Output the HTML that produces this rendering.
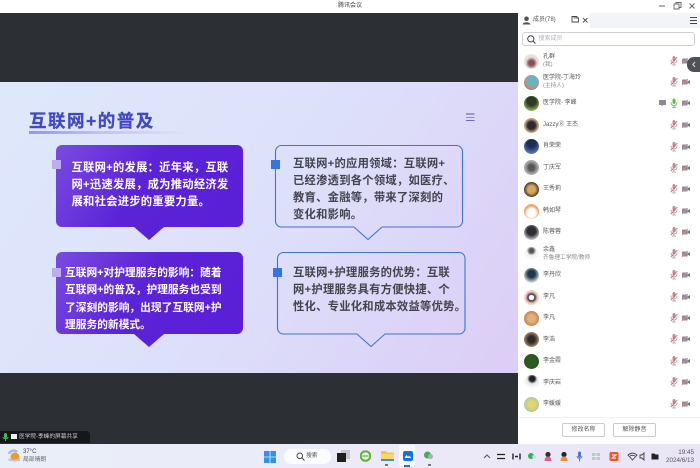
<!DOCTYPE html>
<html lang="zh"><head><meta charset="utf-8"><title>腾讯会议</title>
<style>
*{margin:0;padding:0;box-sizing:border-box}
html,body{width:700px;height:468px;overflow:hidden;background:#2c2f33;font-family:"Liberation Sans","Noto Sans CJK SC",sans-serif}
.a{position:absolute}
.t{position:absolute;white-space:nowrap}
#top{left:0;top:0;width:700px;height:13px;background:#fff}
#slide{left:0;top:82px;width:518px;height:291px;background:linear-gradient(125deg,#dfe8fb 0%,#dde0fa 50%,#dccdf6 100%)}
.card{position:absolute;width:187px;height:82px;border-radius:6px}
.p{background:linear-gradient(120deg,#7a4be0 0%,#5a24d6 45%,#5a1fd8 100%)}
.ln{font-size:11.3px;font-weight:bold;line-height:17px;letter-spacing:.25px}
.w{color:#fff}.d{color:#44444c}
.sq{position:absolute;width:9px;height:9px}
#panel{left:518px;top:13px;width:182px;height:431px;background:#fff}
.n{position:absolute;left:543px;font-size:6px;color:#555;white-space:nowrap;line-height:8px}
.s{position:absolute;left:543px;font-size:5.700px;color:#888;white-space:nowrap;line-height:8px}
.av{position:absolute;left:524px;width:15px;height:15px;border-radius:50%;overflow:hidden}
.btn{position:absolute;top:423px;width:43px;height:14px;border:1px solid #c9c9cf;border-radius:2px;background:#fff;font-size:6px;color:#555;text-align:center;line-height:12px}
#bar{left:0;top:444px;width:700px;height:24px;background:linear-gradient(90deg,#e9eff9 0%,#eceaf9 50%,#e9e5f7 100%)}
</style></head><body>
<svg width="0" height="0" style="position:absolute"><defs>
<g id="mic"><rect x="2.500" y="0" width="3" height="5.500" rx="1.500" fill="#b58f98"/><path d="M1 3.500c0 2.600 1.400 3.500 3 3.500s3-.9 3-3.500M4 7v1.600M2 9h4" fill="none" stroke="#a99aa2" stroke-width=".8"/><path d="M7.400 1 .8 8.200" stroke="#d9666e" stroke-width=".9"/></g>
<g id="cam"><rect x="0" y="1.500" width="5.600" height="5" rx=".8" fill="#8d8d98"/><path d="M5.600 3.500 8 2v4L5.600 4.700z" fill="#777"/><path d="M.2 7 5.800 1" stroke="#e2848a" stroke-width="1"/></g>
</defs></svg>

<div class="a" id="top"></div>
<div class="t" style="left:338px;top:2px;font-size:6px;color:#444;line-height:9px">腾讯会议</div>
<svg class="a" style="left:655px;top:0" width="45" height="12"><path d="M4 6h6" stroke="#666"/><path d="M19 4h5v5h-5zM21 4V2.500h5v5h-2" fill="none" stroke="#666" stroke-width=".9"/><path d="M34.500 3.500l5 5m0-5l-5 5" stroke="#666"/></svg>

<div class="a" id="slide"></div>
<div class="t" style="left:29px;top:111px;font-size:17.500px;line-height:21px;font-weight:bold;color:#4249c6;letter-spacing:1.500px;-webkit-text-stroke:.3px #4249c6">互联网+的普及</div>
<div class="a" style="left:29px;top:131px;width:160px;height:3px;background:linear-gradient(90deg,#9b93e8,#c5c2f0 45%,rgba(220,222,250,0))"></div>
<svg class="a" style="left:466px;top:113px" width="9" height="9"><path d="M0 1h8.500" stroke="#5a52c8"/><path d="M0 4.500h8.500" stroke="#8f88dc"/><path d="M0 7.500h8.500" stroke="#7068d0"/></svg>

<!-- card 1 -->
<div class="card p" style="left:56px;top:145px"></div>
<svg class="a" style="left:134px;top:226px" width="30" height="15"><path d="M0 1H30L15 14z" fill="#5a22d6"/></svg>
<div class="sq" style="left:52px;top:160px;background:#c0aaf0"></div>
<div class="t ln w" style="left:71.500px;top:159.500px">互联网+的发展：近年来，互联<br>网+迅速发展，成为推动经济发<br>展和社会进步的重要力量。</div>

<!-- card 3 -->
<div class="card p" style="left:56px;top:252px"></div>
<svg class="a" style="left:134px;top:333px" width="30" height="15"><path d="M0 1H30L15 14z" fill="#5a22d6"/></svg>
<div class="sq" style="left:52px;top:268px;background:#c0aaf0"></div>
<div class="t ln w" style="left:65px;top:265px;font-size:10.700px;letter-spacing:.05px;line-height:17.300px">互联网+对护理服务的影响：随着<br>互联网+的普及，护理服务也受到<br>了深刻的影响，出现了互联网+护<br>理服务的新模式。</div>

<!-- card 2 -->
<svg class="a" style="left:270px;top:140px" width="200" height="105"><path d="M11.500 5.500H186.500a6 6 0 0 1 6 6V81a6 6 0 0 1-6 6H112L98 99.500 84 87H11.500a6 6 0 0 1-6-6V11.500a6 6 0 0 1 6-6z" fill="none" stroke="#3f74d2" stroke-width="1.100"/></svg>
<div class="sq" style="left:271px;top:160px;background:#3573e8"></div>
<div class="t ln d" style="left:293px;top:156px">互联网+的应用领域：互联网+<br>已经渗透到各个领域，如医疗、<br>教育、金融等，带来了深刻的<br>变化和影响。</div>

<!-- card 4 -->
<svg class="a" style="left:272px;top:247px" width="200" height="105"><path d="M11.500 5.500H187a6 6 0 0 1 6 6V81a6 6 0 0 1-6 6H113L99 99.500 85 87H11.500a6 6 0 0 1-6-6V11.500a6 6 0 0 1 6-6z" fill="none" stroke="#3f74d2" stroke-width="1.100"/></svg>
<div class="sq" style="left:273px;top:268px;background:#3573e8"></div>
<div class="t ln d" style="left:293px;top:265px">互联网+护理服务的优势：互联<br>网+护理服务具有方便快捷、个<br>性化、专业化和成本效益等优势。</div>

<div class="a" style="left:519px;top:223px;width:2px;height:13px;background:#d8d8de"></div>

<!-- bottom-left banner -->
<div class="a" style="left:0;top:431px;width:90px;height:12px;background:#15171a;border-radius:0 4px 0 0"></div>
<svg class="a" style="left:2px;top:433px" width="16" height="9"><rect x="2" y="0" width="3" height="5" rx="1.500" fill="#3fc24a"/><path d="M1 4c0 2 5 2 5 0M3.500 6v2" stroke="#3fc24a" fill="none"/><rect x="9" y="1" width="6" height="5" fill="#eee"/></svg>
<div class="t" style="left:19px;top:433px;font-size:5.700px;line-height:9px;color:#c9c9c9">医学院-季峰的屏幕共享</div>

<!-- panel -->
<div class="a" id="panel"></div>
<div class="a" style="left:590px;top:13px;width:110px;height:15px;background:#f2f4f9"></div>
<svg class="a" style="left:522px;top:16px" width="10" height="9"><circle cx="4.500" cy="2.800" r="2.300" fill="#555"/><path d="M.5 8.500c.4-3 7.600-3 8 0z" fill="#555"/></svg>
<div class="t" style="left:533px;top:16px;font-size:6px;line-height:9px;color:#555">成员(78)</div>
<svg class="a" style="left:571px;top:15px" width="20" height="10"><path d="M1 1.500h5v1.500h1.500v4H1z" fill="none" stroke="#444" stroke-width=".9"/><path d="M3 1v2h4" stroke="#444" stroke-width=".7" fill="none"/><path d="M12 3l4.500 4.500m0-4.500L12 7.500" stroke="#555"/></svg>
<svg class="a" style="left:689px;top:16px" width="9" height="9"><path d="M1 1.500h7M1 4.500h7M1 7.500h7" stroke="#444"/></svg>
<div class="a" style="left:522px;top:32px;width:173px;height:14px;border:1px solid #ccd0d6;border-radius:3px;background:#fff"></div>
<svg class="a" style="left:526px;top:34px" width="11" height="11"><circle cx="4.800" cy="4.800" r="3.100" fill="none" stroke="#444" stroke-width="1"/><path d="M7 7l2.500 2.500" stroke="#444"/></svg>
<div class="t" style="left:538.500px;top:35px;font-size:6px;line-height:8px;color:#b5b5bb">搜索成员</div>

<!-- rows -->
<div class="av" style="top:54px;background:radial-gradient(circle at 50% 60%,#8a4c58 0 22%,#e6ded8 50%,#efeae6)"></div>
<div class="n" style="top:53px">孔群</div><div class="s" style="top:61px">(我)</div>
<div class="av" style="top:75px;background:radial-gradient(circle at 55% 40%,#63b7c0 0 35%,#c98a7c 60%,#6a4a50)"></div>
<div class="n" style="top:74px">医学院-丁海玲</div><div class="s" style="top:82px">(主持人)</div>
<div class="av" style="top:96px;background:radial-gradient(circle at 50% 35%,#2e3a24 0 35%,#8fb04a 75%)"></div>
<div class="n" style="top:99px">医学院- 李峰</div>
<div class="av" style="top:118px;background:radial-gradient(circle at 50% 50%,#2a2a30 0 35%,#cfa878 65%,#8a6a50)"></div>
<div class="n" style="top:121px">Jazzy⑧ 王杰</div>
<div class="av" style="top:139px;background:radial-gradient(circle at 50% 30%,#1f2c50 0 30%,#4a6fb8 70%)"></div>
<div class="n" style="top:142px">肖荣荣</div>
<div class="av" style="top:160px;background:radial-gradient(circle,#555 0 25%,#a8a8a8 60%)"></div>
<div class="n" style="top:164px">丁庆军</div>
<div class="av" style="top:182px;background:radial-gradient(circle,#d9a860 0 35%,#332a24 75%)"></div>
<div class="n" style="top:185px">王秀莉</div>
<div class="av" style="top:204px;background:radial-gradient(circle at 50% 60%,#fff 0 38%,#ee9e62 62%,#fbe2cc)"></div>
<div class="n" style="top:207px">韩如琴</div>
<div class="av" style="top:225px;background:radial-gradient(circle at 50% 40%,#2e2c34 0 35%,#c8c6cc 75%)"></div>
<div class="n" style="top:228px">陈蓉蓉</div>
<div class="av" style="top:247px;background:radial-gradient(circle at 50% 25%,#555 0 15%,#f0f0ec 35%,#fff 70%)"></div>
<div class="n" style="top:246px">余鑫</div><div class="s" style="top:254px">齐鲁理工学院/教师</div>
<div class="av" style="top:268px;background:radial-gradient(circle at 50% 40%,#1e3a48 0 30%,#cfd8d0 70%)"></div>
<div class="n" style="top:271px">李丹欣</div>
<div class="av" style="top:290px;background:radial-gradient(circle,#fff 0 22%,#333 30%,#f5c8c0 55%,#fbe4e0)"></div>
<div class="n" style="top:293px">李凡</div>
<div class="av" style="top:311px;background:radial-gradient(circle at 50% 50%,#e0b080 0 35%,#c67a36 75%)"></div>
<div class="n" style="top:314px">李凡</div>
<div class="av" style="top:332px;background:radial-gradient(circle at 50% 50%,#2e2a28 0 30%,#a89070 75%)"></div>
<div class="n" style="top:336px">李浩</div>
<div class="av" style="top:354px;background:radial-gradient(circle,#2c5a22 0 50%,#1f4a1c)"></div>
<div class="n" style="top:357px">李金霞</div>
<div class="av" style="top:375px;background:radial-gradient(circle at 55% 25%,#222 0 18%,#e6e6e6 36%,#fff 70%)"></div>
<div class="n" style="top:379px">李庆岩</div>
<div class="av" style="top:397px;background:radial-gradient(circle,#e0d86a 0 30%,#a8c4b0 75%)"></div>
<div class="n" style="top:400px">李媛媛</div>

<!-- row icons -->
<svg class="a" style="left:670px;top:50px" width="22" height="362">
<use href="#mic" x="0" y="6"/><use href="#cam" x="12" y="7"/>
<use href="#mic" x="0" y="27"/><use href="#cam" x="12" y="28"/>
<use href="#cam" x="12" y="49"/>
<g transform="translate(0 48.500)"><rect x="2.500" y="0" width="3" height="5.500" rx="1.500" fill="#55c23e"/><path d="M1 3.500c0 2.600 1.400 3.500 3 3.500s3-.9 3-3.500M4 7v1.600M2 9h4" fill="none" stroke="#55c23e" stroke-width=".8"/></g>
<use href="#mic" x="0" y="70"/><use href="#cam" x="12" y="71"/>
<use href="#mic" x="0" y="92"/><use href="#cam" x="12" y="93"/>
<use href="#mic" x="0" y="113"/><use href="#cam" x="12" y="114"/>
<use href="#mic" x="0" y="134"/><use href="#cam" x="12" y="135"/>
<use href="#mic" x="0" y="156"/><use href="#cam" x="12" y="157"/>
<use href="#mic" x="0" y="177"/><use href="#cam" x="12" y="178"/>
<use href="#mic" x="0" y="199"/><use href="#cam" x="12" y="200"/>
<use href="#mic" x="0" y="220"/><use href="#cam" x="12" y="221"/>
<use href="#mic" x="0" y="242"/><use href="#cam" x="12" y="243"/>
<use href="#mic" x="0" y="263"/><use href="#cam" x="12" y="264"/>
<use href="#mic" x="0" y="284"/><use href="#cam" x="12" y="285"/>
<use href="#mic" x="0" y="306"/><use href="#cam" x="12" y="307"/>
<use href="#mic" x="0" y="327"/><use href="#cam" x="12" y="328"/>
<use href="#mic" x="0" y="349"/><use href="#cam" x="12" y="350"/>
</svg>
<svg class="a" style="left:658px;top:99px" width="10" height="9"><path d="M1 1h7v5H5L4 7.500 3.200 6H1z" fill="#8b8b92"/></svg>
<div class="a" style="left:687px;top:57px;width:13px;height:15px;background:#4f5254;border-radius:7px 0 0 7px"></div>
<svg class="a" style="left:691px;top:61px" width="6" height="7"><path d="M4 1 1.800 3.500 4 6" stroke="#ddd" fill="none"/></svg>

<div class="a" style="left:518px;top:417px;width:182px;height:1px;background:#f1f1f3"></div>
<div class="btn" style="left:562px">修改名称</div>
<div class="btn" style="left:613px">解除静音</div>

<!-- taskbar -->
<div class="a" id="bar"></div>
<svg class="a" style="left:7px;top:449px" width="14" height="14"><path d="M2 5C3 1.500 8 .5 10 3" fill="none" stroke="#a9bcd8" stroke-width="2.500"/><circle cx="8" cy="8" r="4.500" fill="#ef9a2e"/><path d="M1 9c3 2 8 2 12 .5V12H2z" fill="#b4c8e4"/></svg>
<div class="t" style="left:23px;top:449px;font-size:6px;line-height:7px;color:#444">37°C</div>
<div class="t" style="left:23px;top:456px;font-size:5.800px;line-height:8px;color:#666">局部晴朗</div>

<svg class="a" style="left:264px;top:451px" width="12" height="12"><path d="M0 0h5.600v5.600H0zM6.400 0H12v5.600H6.400zM0 6.400h5.600V12H0zM6.400 6.400H12V12H6.400z" fill="#2f93e8"/></svg>
<div class="a" style="left:284px;top:449px;width:47px;height:15px;border-radius:8px;background:#fbfcfe"></div>
<svg class="a" style="left:296px;top:452px" width="9" height="9"><circle cx="3.800" cy="3.800" r="2.800" fill="none" stroke="#444"/><path d="M6 6l2.500 2.500" stroke="#444"/></svg>
<div class="t" style="left:306px;top:452px;font-size:5.800px;line-height:8px;color:#555">搜索</div>
<svg class="a" style="left:337px;top:450px" width="13" height="13"><rect x="4" y="0" width="9" height="9" fill="#c8c8cc"/><rect x="0" y="3" width="9" height="9" fill="#1e1e20"/></svg>
<svg class="a" style="left:360px;top:450px" width="11" height="12"><circle cx="5.500" cy="6" r="4.800" fill="none" stroke="#59b52e" stroke-width="2"/><path d="M2.500 6h6" stroke="#7ac73e" stroke-width="1.500"/></svg>
<svg class="a" style="left:381px;top:450px" width="13" height="12"><path d="M0 1h5l1 1.500h7V11H0z" fill="#f2c53f"/><rect x="0" y="4" width="13" height="7" fill="#f8d768"/><rect x="0" y="9" width="13" height="2" fill="#3d90d8"/></svg>
<div class="a" style="left:385px;top:464px;width:3px;height:2px;background:#777"></div>
<div class="a" style="left:399px;top:445px;width:16px;height:21px;background:#f6f8fd;border-radius:2px"></div>
<svg class="a" style="left:403px;top:451px" width="10" height="10"><rect width="10" height="10" rx="2" fill="#1670e8"/><path d="M1.500 7l2-3 1.500 2 1-1.500L8.500 7z" fill="#fff"/></svg>
<div class="a" style="left:404px;top:465px;width:6px;height:2px;background:#1f6fd6"></div>
<svg class="a" style="left:423px;top:450px" width="11" height="11"><circle cx="4.500" cy="5" r="3.500" fill="#41ad55"/><circle cx="7.500" cy="6.500" r="2.500" fill="#9fb8a4"/></svg>
<div class="a" style="left:428px;top:464px;width:3px;height:2px;background:#777"></div>

<svg class="a" style="left:482px;top:450px" width="180" height="13">
<path d="M2 8l3-3 3 3" fill="none" stroke="#555"/>
<path d="M15 4.500h8M15 8.500h8" stroke="#222" stroke-width="1.200"/>
<path d="M31 3.500v6M38 3.500v6M33 6.500h3" stroke="#222" stroke-width="1.400"/>
<circle cx="49" cy="6" r="3" fill="#2fb25a"/><circle cx="52" cy="6.800" r="1.800" fill="#cfd8d2"/>
<circle cx="66" cy="4.500" r="2.600" fill="#3e2a30"/><path d="M62.500 11c0-6 7-6 7 0z" fill="#e0608a"/>
<circle cx="82" cy="4.500" r="2.600" fill="#2a2528"/><path d="M78.500 11c0-6 7-6 7 0z" fill="#ef8f3a"/>
<rect x="96" y="1.500" width="3" height="6" rx="1.500" fill="#4a78c8"/><path d="M95 6c0 3 5 3 5 0M97.500 8.500v3" fill="none" stroke="#4a78c8"/>
<path d="M110 3h8v7h-8z" fill="#bfc6cc"/><path d="M114 1v11M108 6.500h12" stroke="#e8ecf4"/>
<rect x="127.500" y="2" width="9" height="9" rx="1.500" fill="#e8582a"/><path d="M130 5h4l-4 3h4" stroke="#fff" fill="none"/>
<path d="M146 5c3-2.500 6-2.500 9 0l-4.500 5zM148 6c2-1 3-1 5 0" fill="none" stroke="#444" stroke-width=".9"/>
<path d="M158 5h2l2-2v7l-2-2h-2z" fill="none" stroke="#444" stroke-width=".9"/>
<path d="M169.500 3.500h3l1 1h3v5h-7z" fill="#222"/>
</svg>
<div class="t" style="left:660px;top:449px;width:34px;text-align:right;font-size:6.300px;line-height:8px;color:#555">19:45<br>2024/6/13</div>
</body></html>
